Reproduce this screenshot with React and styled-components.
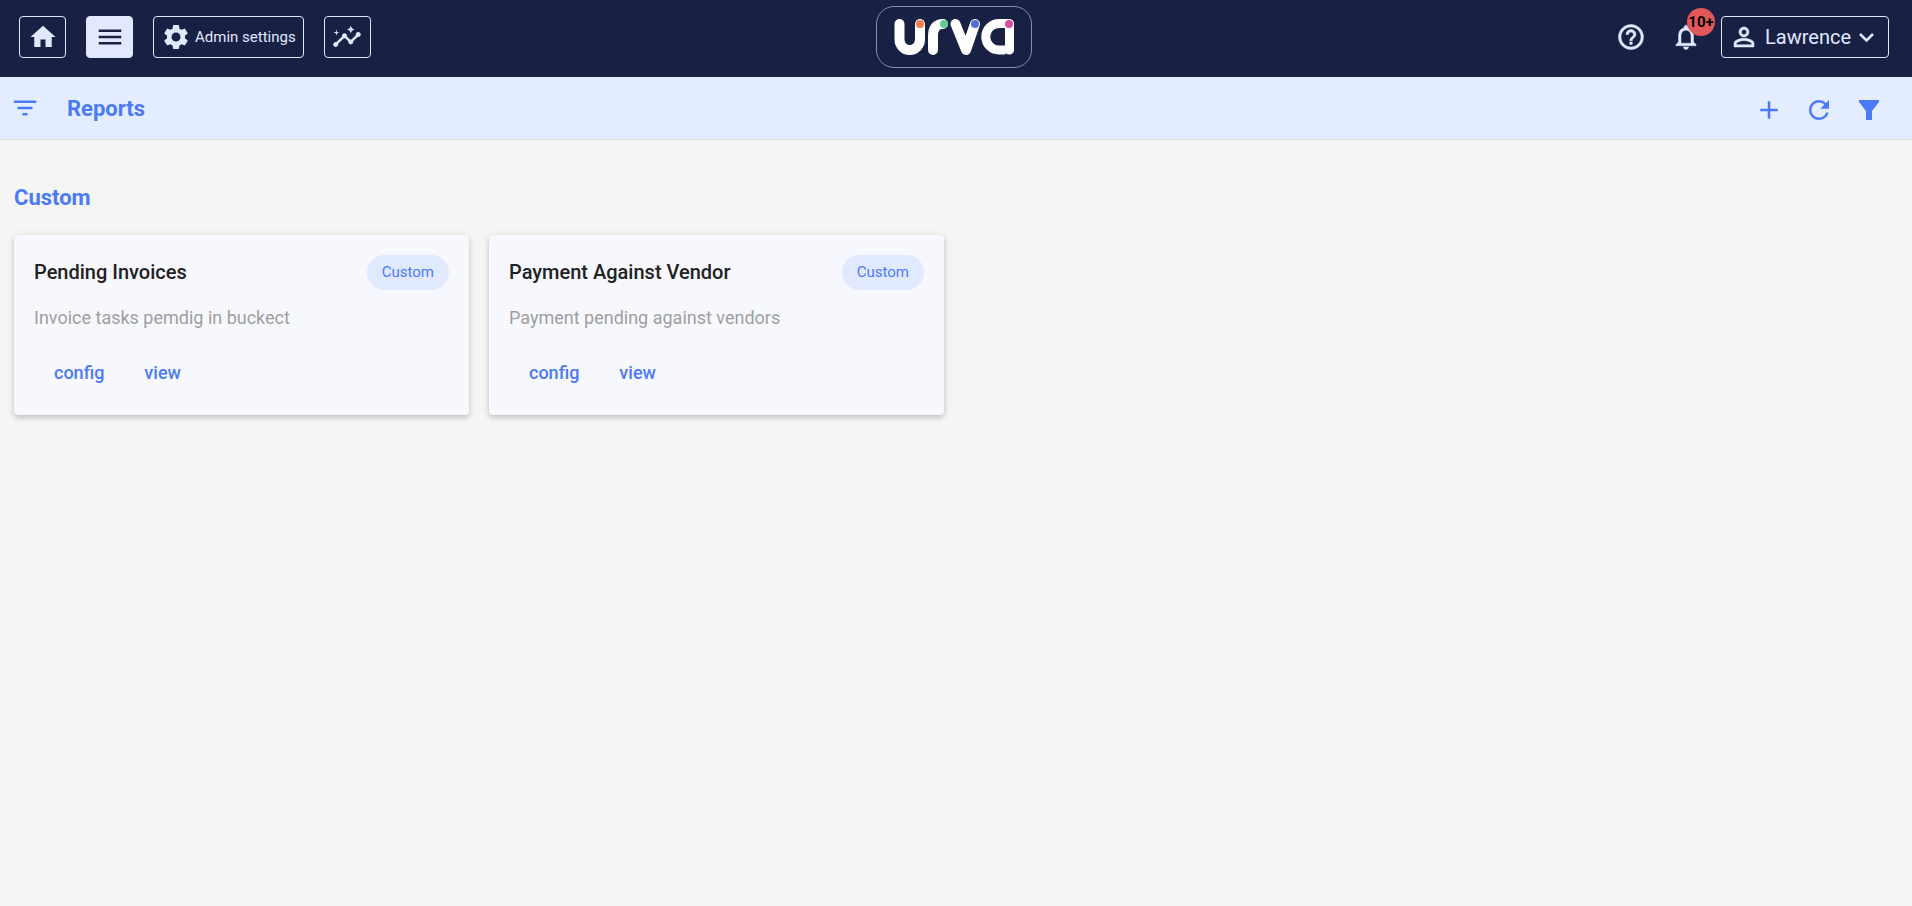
import React from "react";
import styled, { createGlobalStyle } from "styled-components";
import {
  MdHome, MdMenu, MdSettings, MdInsights, MdHelpOutline, MdNotificationsNone,
  MdPersonOutline, MdFilterList, MdAdd, MdRefresh,
} from "react-icons/md";

const GlobalStyle = createGlobalStyle`
  *, *::before, *::after { box-sizing: border-box; }
  body {
    margin: 0;
    background: #f5f5f5;
    color: #212121;
    font-family: Roboto, "Liberation Sans", sans-serif;
    font-size: 18px;
  }
  button { font: inherit; cursor: pointer; }
  svg { display: block; flex: none; }
`;

const TopBar = styled.header`
  display: grid;
  grid-template-columns: 1fr auto 1fr;
  align-items: center;
  height: 77px;
  padding: 0 23px 3px 19px;
  background: #182044;
`;

const NavGroup = styled.nav`
  display: flex;
  gap: 20px;
`;

const UserGroup = styled.div`
  display: flex;
  align-items: center;
  justify-content: flex-end;

  path:not([fill="none"]) { stroke-width: 0.4; }
`;

const OutlineButton = styled.button`
  display: flex;
  align-items: center;
  justify-content: center;
  gap: ${({ $gap }) => $gap || 0}px;
  min-width: 47px;
  height: 42px;
  padding: 0 7px;
  border: 1px solid #e1e8ff;
  border-radius: 4px;
  background: ${({ $active }) => ($active ? "#e1e8ff" : "transparent")};
  color: ${({ $active }) => ($active ? "#192044" : "#e1e8ff")};
  font-size: 15px;
`;

const UserName = styled.span`
  padding-left: 6px;
  font-size: 20px;
`;

const PlainButton = styled.button`
  position: relative;
  display: flex;
  padding: 0;
  margin-right: ${({ $after }) => $after || 0}px;
  border: 0;
  background: none;
  color: ${({ $tone }) => $tone || "#e1e8ff"};
`;

const Badge = styled.span`
  position: absolute;
  top: -14px;
  right: -14px;
  width: 28px;
  height: 28px;
  border-radius: 50%;
  background: #e05858;
  color: #000;
  font-size: 15px;
  font-weight: 700;
  line-height: 28px;
  text-align: center;
`;

const LogoLink = styled.a`
  display: flex;
  align-items: center;
  justify-content: center;
  width: 156px;
  height: 62px;
  border: 1px solid #8b90a6;
  border-radius: 18px;
`;

const PageBar = styled.div`
  display: flex;
  align-items: center;
  height: 63px;
  padding: 0 28px 0 10px;
  border-bottom: 1px solid #e0e0e0;
  background: #e4ecff;
`;

const Title = styled.h1`
  flex: 1;
  margin: 0;
  padding-top: 2px;
  color: #4a7af5;
  font-size: 22px;
  font-weight: 700;
  line-height: 28px;
`;

const Actions = styled.div`
  display: flex;
  gap: 20px;
  padding-top: 4px;
`;

const Content = styled.main`
  padding: 44px 18px 20px 14px;
`;

const SectionTitle = styled.h2`
  margin: 0 0 23px;
  color: #4a7af5;
  font-size: 22px;
  font-weight: 700;
  line-height: 28px;
`;

const CardGrid = styled.div`
  display: grid;
  grid-template-columns: repeat(4, 1fr);
  gap: 20px;
`;

const Card = styled.article`
  padding: 20px;
  border-radius: 4px;
  background: #f7f8fe;
  box-shadow: 0 3px 5px rgba(0, 0, 0, 0.14), 0 1px 9px rgba(0, 0, 0, 0.1);
`;

const CardHead = styled.div`
  display: flex;
  align-items: flex-start;
  justify-content: space-between;
`;

const CardTitle = styled.h3`
  margin: 0;
  font-size: 20px;
  font-weight: 500;
  line-height: 34px;
`;

const Chip = styled.span`
  padding: 0 15px;
  border-radius: 18px;
  background: #e1e9ff;
  color: #4a7af5;
  font-size: 15px;
  line-height: 35px;
`;

const Description = styled.p`
  margin: 16px 0 20px;
  color: #9e9e9e;
  line-height: 24px;
`;

const CardActions = styled.div`
  display: flex;
`;

const TextButton = styled.button`
  height: 45px;
  padding: 0 20px;
  border: 0;
  background: none;
  color: #4a7af5;
  font-size: 18px;
  font-weight: 500;
`;

const reports = [
  { title: "Pending Invoices", text: "Invoice tasks pemdig in buckect", kind: "Custom" },
  { title: "Payment Against Vendor", text: "Payment pending against vendors", kind: "Custom" },
];

function Logo() {
  return (
    <svg width="122" height="38" viewBox="0 0 122 38" fill="none" aria-hidden="true">
      <g stroke="#fff" strokeLinecap="round" strokeLinejoin="round">
        <path strokeWidth="10" d="M6.500 6V21.500a10.250 10.500 0 0 0 20.500 0V6" />
        <path strokeWidth="10" d="M40 32V18Q40 6 50 6" />
        <path strokeWidth="10" d="M62.500 6L73 32L82 6" />
        <path strokeWidth="9" d="M116.500 5.500H106a13.200 13.200 0 0 0 0 26.500h7M116.500 5.500V32" />
      </g>
      <path d="M111.500 37.500L113 35L114.500 37.500Z" fill="#182044" />
      <circle cx="27" cy="6" r="4" fill="#f27a4d" />
      <circle cx="51" cy="6" r="4" fill="#5ecb92" />
      <circle cx="82" cy="6" r="4" fill="#4f6de0" />
      <circle cx="116" cy="6" r="4" fill="#d94f9e" />
    </svg>
  );
}

function ChevronIcon() {
  return (
    <svg width="30" height="30" viewBox="0 0 30 30" fill="none" aria-hidden="true">
      <path fill="none" d="M9 12L15.500 18.500L22 12" stroke="currentColor" strokeWidth="2.600" />
    </svg>
  );
}

function FunnelIcon() {
  return (
    <svg width="30" height="30" viewBox="0 0 30 30" fill="currentColor" aria-hidden="true">
      <path d="M5 5H25V7L18 16V25H12V16L5 7Z" />
    </svg>
  );
}

function ReportCard({ report }) {
  return (
    <Card>
      <CardHead>
        <CardTitle>{report.title}</CardTitle>
        <Chip>{report.kind}</Chip>
      </CardHead>
      <Description>{report.text}</Description>
      <CardActions>
        <TextButton type="button">config</TextButton>
        <TextButton type="button">view</TextButton>
      </CardActions>
    </Card>
  );
}

export default function App() {
  return (
    <>
      <GlobalStyle />
      <TopBar>
        <NavGroup aria-label="Main">
          <OutlineButton type="button" aria-label="Home"><MdHome size={30} /></OutlineButton>
          <OutlineButton type="button" aria-label="Menu" $active><MdMenu size={30} /></OutlineButton>
          <OutlineButton type="button" $gap={4}><MdSettings size={30} />Admin settings</OutlineButton>
          <OutlineButton type="button" aria-label="Insights"><MdInsights size={30} /></OutlineButton>
        </NavGroup>
        <LogoLink href="#" aria-label="urva"><Logo /></LogoLink>
        <UserGroup>
          <PlainButton type="button" aria-label="Help" $after={25}><MdHelpOutline size={30} /></PlainButton>
          <PlainButton type="button" aria-label="Notifications" $after={20}>
            <MdNotificationsNone size={30} />
            <Badge>10+</Badge>
          </PlainButton>
          <OutlineButton type="button">
            <MdPersonOutline size={30} />
            <UserName>Lawrence</UserName>
            <ChevronIcon />
          </OutlineButton>
        </UserGroup>
      </TopBar>
      <PageBar>
        <PlainButton type="button" aria-label="Toggle list" $tone="#4a7af5" $after={27}><MdFilterList size={30} /></PlainButton>
        <Title>Reports</Title>
        <Actions>
          <PlainButton type="button" aria-label="Add" $tone="#4a7af5"><MdAdd size={30} /></PlainButton>
          <PlainButton type="button" aria-label="Refresh" $tone="#4a7af5"><MdRefresh size={30} /></PlainButton>
          <PlainButton type="button" aria-label="Filter" $tone="#4a7af5"><FunnelIcon /></PlainButton>
        </Actions>
      </PageBar>
      <Content>
        <SectionTitle>Custom</SectionTitle>
        <CardGrid>
          {reports.map((report) => <ReportCard key={report.title} report={report} />)}
        </CardGrid>
      </Content>
    </>
  );
}
